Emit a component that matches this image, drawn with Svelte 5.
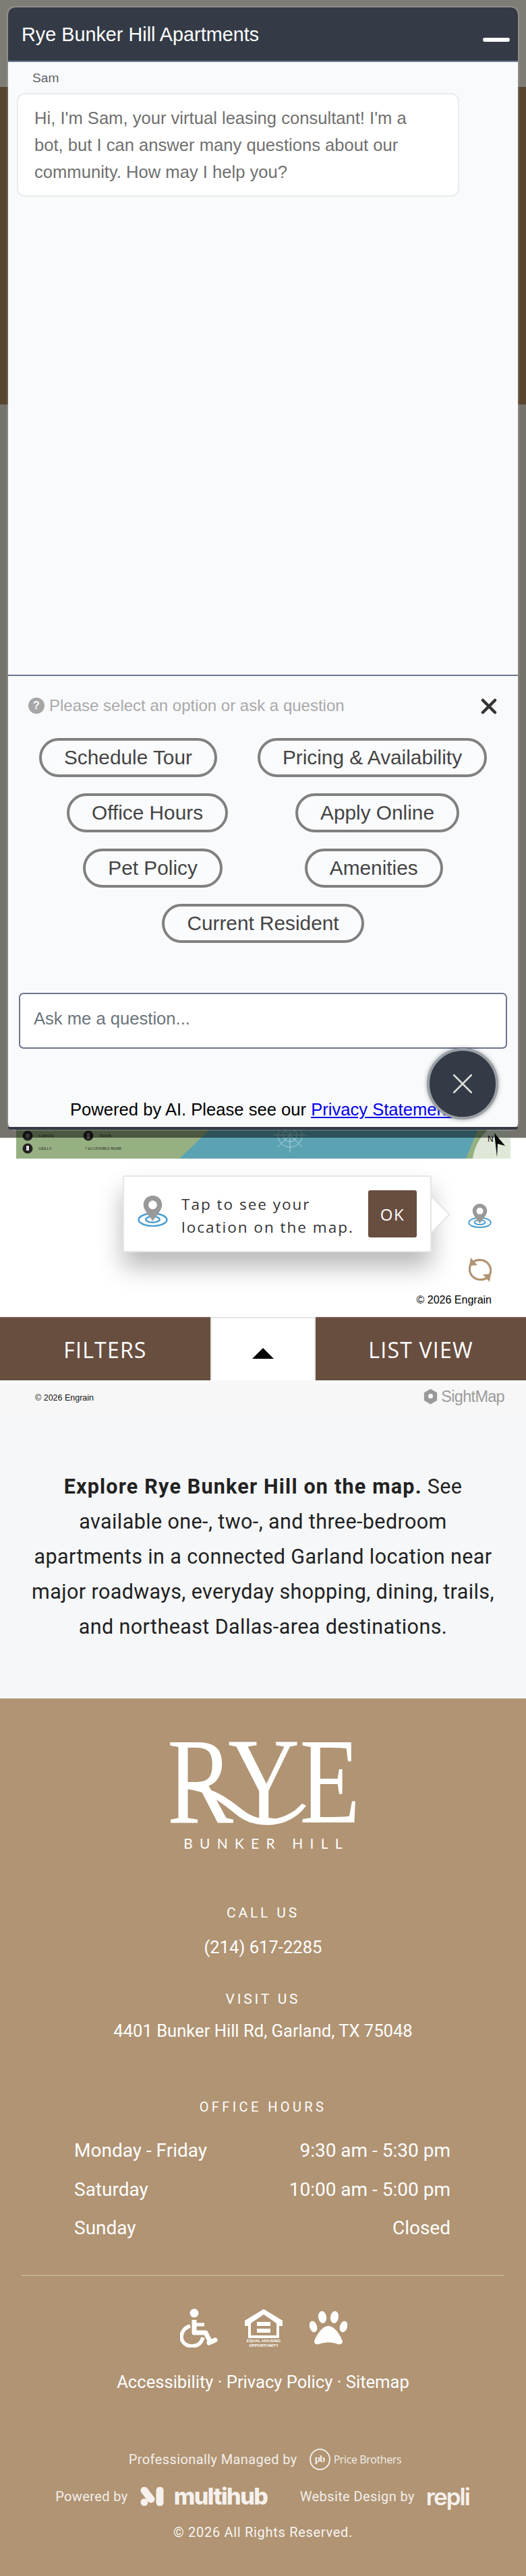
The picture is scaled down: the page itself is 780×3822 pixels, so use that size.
<script>
  const rows = [
    { cls: 'g60', items: ['Schedule Tour', 'Pricing & Availability'] },
    { cls: 'g100', items: ['Office Hours', 'Apply Online'] },
    { cls: 'g122', items: ['Pet Policy', 'Amenities'] },
    { cls: '', items: ['Current Resident'] }
  ];
  const hours = [
    ['Monday - Friday', '9:30 am - 5:30 pm'],
    ['Saturday', '10:00 am - 5:00 pm'],
    ['Sunday', 'Closed']
  ];
</script>

{#snippet pin(cls)}
  <svg class={cls} viewBox="0 0 44 45" aria-hidden="true">
    <ellipse cx="22" cy="35" rx="20.5" ry="9" fill="none" stroke="#4b9fd1" stroke-width="2.5" />
    <ellipse cx="22" cy="34.5" rx="10" ry="4.4" fill="none" stroke="#4b9fd1" stroke-width="2.5" />
    <path d="M22 0C13.5 0 8.5 6.5 8.5 13.5 8.5 21.5 18.5 31 22 37 25.500 31 35.500 21.500 35.500 13.500 35.500 6.500 30.500 0 22 0Z" fill="#999" />
    <circle cx="22" cy="13.500" r="6.300" fill="#fff" />
  </svg>
{/snippet}

<div class="page">
  <section class="hero">
    <div class="band-top"></div>
    <div class="band-brown"></div>
    <div class="band-gray"></div>
    <div class="map-wrap">
      <svg class="map" viewBox="0 0 733 59" aria-label="Community site map">
        <rect width="733" height="59" fill="#97b082" />
        <path d="M304 0H691L667 59H242Z" fill="#5ba3b3" />
        <path d="M677 59C680 36 694 16 720 0H733V59Z" fill="#dfe8d8" />
        <g fill="none" stroke="#a9d0d8" stroke-width="1">
          <circle cx="406" cy="24" r="10" />
          <circle cx="406" cy="24" r="18" />
          <path d="M406 0V50M381 24H431M388 6 424 42M424 6 388 42" />
        </g>
        <circle cx="17" cy="25" r="7.500" fill="#222" />
        <circle cx="107" cy="25" r="7.500" fill="#222" />
        <circle cx="17" cy="44" r="7.500" fill="#222" />
        <circle cx="17" cy="25" r="3" fill="#777" />
        <rect x="105" y="21" width="4" height="8" fill="#777" />
        <rect x="15" y="40" width="4" height="7" fill="#ddd" />
        <g class="legend">
          <text x="33" y="27">CABANA</text>
          <text x="123" y="27">TRASH</text>
          <text x="33" y="46">GRILLS</text>
          <text x="102" y="46">* ACCESSIBLE HOME</text>
        </g>
        <text class="north" x="699" y="34">N</text>
        <path d="M709 21 725 40 714 37 713 57Z" fill="#000" />
      </svg>
    </div>
    <div class="overlay"></div>

    <aside class="chat">
      <header class="chat-head">
        <h1>Rye Bunker Hill Apartments</h1>
        <span class="minimize"></span>
      </header>
      <div class="messages">
        <div class="sender">Sam</div>
        <p class="bubble">Hi, I'm Sam, your virtual leasing consultant! I'm a bot, but I can answer many questions about our community. How may I help you?</p>
      </div>
      <div class="options">
        <div class="prompt">
          <span class="q">?</span>
          <span class="prompt-text">Please select an option or ask a question</span>
          <svg class="close" viewBox="0 0 24 24" aria-hidden="true"><path d="M3 3 21 21M21 3 3 21" stroke="#333" stroke-width="4.500" stroke-linecap="round" /></svg>
        </div>
        <div class="choices">
          {#each rows as row}
            <div class="choice-row {row.cls}">
              {#each row.items as item}
                <button type="button">{item}</button>
              {/each}
            </div>
          {/each}
        </div>
        <div class="ask">Ask me a question...</div>
        <p class="ai">Powered by AI. Please see our <a href="#privacy">Privacy Statement.</a></p>
      </div>
      <div class="strip"></div>
      <div class="fab">
        <svg viewBox="0 0 28 28" aria-hidden="true"><path d="M1 1 27 27M27 1 1 27" stroke="#ddd" stroke-width="2.500" stroke-linecap="round" /></svg>
      </div>
    </aside>
  </section>

  <section class="controls">
    <div class="controls-row">
      <div class="tip">
        {@render pin('tip-pin')}
        <p>Tap to see your<br />location on the map.</p>
        <button type="button" class="ok">OK</button>
        <span class="tip-arrow"></span>
      </div>
      <div class="side">
        {@render pin('side-pin')}
        <svg class="refresh" viewBox="0 0 34 36" aria-hidden="true">
          <path d="M4 9C9 2 22 1 29 9 34 15 33 22 31 26" fill="none" stroke="#b09473" stroke-width="3.200" />
          <path d="M30 27C25 34 12 35 5 27 0 21 1 14 3 10" fill="none" stroke="#b09473" stroke-width="3.200" />
          <path d="M3 0 1 12 13 11Z" fill="#b09473" />
          <path d="M31 36 33 24 21 25Z" fill="#b09473" />
        </svg>
      </div>
    </div>
    <div class="engrain">© 2026 Engrain</div>
  </section>

  <nav class="tabs">
    <div class="tab">FILTERS</div>
    <div class="tab-mid"><span class="tri"></span></div>
    <div class="tab">LIST VIEW</div>
  </nav>

  <div class="credit">
    <span class="credit-text">© 2026 Engrain</span>
    <span class="sightmap">
      <svg viewBox="0 0 24 26" aria-hidden="true">
        <path d="M12 0 23 6.500V19.500L12 26 1 19.500V6.500Z" fill="#999" />
        <circle cx="12" cy="12.500" r="4" fill="#f7f7f7" />
      </svg>
      SightMap
    </span>
  </div>

  <section class="explore">
    <p><strong>Explore Rye Bunker Hill on the map.</strong> See available one-, two-, and three-bedroom apartments in a connected Garland location near major roadways, everyday shopping, dining, trails, and northeast Dallas-area destinations.</p>
  </section>

  <footer>
    <div class="logo">
      <svg viewBox="0 0 280 124" aria-label="Rye logo">
        <text class="logo-text" x="-2" y="121" textLength="286" lengthAdjust="spacingAndGlyphs">RYE</text>
        <path d="M22 68C62 64 86 84 112 104 134 121 172 122 198 93L204 96C180 130 132 132 104 112 78 92 60 74 22 71Z" fill="#fff" />
      </svg>
      <div class="logo-sub">BUNKER HILL</div>
    </div>

    <h2 class="call">CALL US</h2>
    <p class="info phone">(214) 617-2285</p>
    <h2 class="visit">VISIT US</h2>
    <p class="info addr">4401 Bunker Hill Rd, Garland, TX 75048</p>
    <h2 class="office">OFFICE HOURS</h2>

    <div class="hours">
      {#each hours as h}
        <div class="hour-row"><span>{h[0]}</span><span>{h[1]}</span></div>
      {/each}
    </div>

    <hr />

    <div class="badges">
      <svg class="b-wheel" viewBox="0 0 56 58" aria-hidden="true">
        <circle cx="21" cy="7" r="6.500" fill="#fff" />
        <path d="M21 17V36H38L45 50" fill="none" stroke="#fff" stroke-width="7" stroke-linejoin="round" />
        <path d="M21 24H36" fill="none" stroke="#fff" stroke-width="5" />
        <path d="M43 51 52 47" fill="none" stroke="#fff" stroke-width="7" stroke-linecap="round" />
        <path d="M15 26C5 29 2 37 2 42 2 51 10 56 18 56 26 56 32 51 34 43" fill="none" stroke="#fff" stroke-width="5.500" />
      </svg>
      <svg class="b-eho" viewBox="0 0 56 56" aria-hidden="true">
        <path d="M28 0 56 17V25H51V43H5V25H0V17ZM9 21V39H47V21L28 8Z" fill="#fff" fill-rule="evenodd" />
        <rect x="18" y="19" width="20" height="6" fill="#fff" />
        <rect x="18" y="29" width="20" height="6" fill="#fff" />
        <text x="28" y="49" class="eho-text">EQUAL HOUSING</text>
        <text x="28" y="55.500" class="eho-text">OPPORTUNITY</text>
      </svg>
      <svg class="b-paw" viewBox="0 0 56 50" aria-hidden="true">
        <ellipse cx="5.500" cy="23" rx="5.500" ry="8.500" fill="#fff" transform="rotate(-18 5.500 23)" />
        <ellipse cx="19" cy="9" rx="6" ry="9" fill="#fff" transform="rotate(-8 19 9)" />
        <ellipse cx="37" cy="9" rx="6" ry="9" fill="#fff" transform="rotate(8 37 9)" />
        <ellipse cx="50.500" cy="23" rx="5.500" ry="8.500" fill="#fff" transform="rotate(18 50.500 23)" />
        <path d="M28 22C18 22 9 38 7 45 7 50 12 50 17 48 24 46 32 46 39 48 44 50 49 50 49 45 47 38 38 22 28 22Z" fill="#fff" />
      </svg>
    </div>

    <p class="links">Accessibility · Privacy Policy · Sitemap</p>

    <div class="managed">
      <span>Professionally Managed by</span>
      <span class="pb-mark"><span>pb</span></span>
      <span class="pb-name">Price Brothers</span>
    </div>

    <div class="powered">
      <span>Powered by</span>
      <svg class="mh-icon" viewBox="0 0 35 28" aria-hidden="true">
        <path d="M6 5 16 18" stroke="#f6f1ed" stroke-width="11" stroke-linecap="round" />
        <circle cx="6" cy="22.500" r="5.500" fill="#f6f1ed" />
        <path d="M29 5V23" stroke="#f6f1ed" stroke-width="11" stroke-linecap="round" />
      </svg>
      <span class="mh-word">multihub</span>
      <span class="design">Website Design by</span>
      <span class="repli">repli</span>
    </div>

    <p class="copy">© 2026 All Rights Reserved.</p>
  </footer>
</div>

<style>
  :global(body) { margin: 0; background: #fff; }
  * { box-sizing: border-box; }
  p, h1, h2 { margin: 0; font-weight: 400; }

  .page { width: 780px; height: 3822px; overflow: hidden; font-family: Roboto, sans-serif; }

  .hero { position: relative; height: 1719px; display: flex; flex-direction: column; }
  .band-top { height: 129px; background: #fff9ea; }
  .band-brown { height: 471px; background: #ae8a5e; }
  .band-gray { flex: 1; background: #eae6d8; }
  .map-wrap {
    height: 59px; padding: 0 23px 0 24px;
    background: linear-gradient(#eae6d8 29px, #fff 29px);
  }
  .map { display: block; width: 733px; height: 59px; }
  .legend text { font: 5.500px "Liberation Serif", serif; fill: #222; }
  .north { font: 12px "Liberation Sans", sans-serif; fill: #000; }

  .overlay { position: absolute; left: 0; right: 0; top: 0; height: 1688px; background: rgba(0, 0, 0, 0.5); }

  .chat {
    position: absolute; left: 12px; top: 11px; width: 756px; height: 1665px;
    display: flex; flex-direction: column;
    background: #f9fafc; border-radius: 10px;
    box-shadow: 0 0 0 2px rgba(255, 255, 255, 0.14);
    font-family: "Liberation Sans", Arial, sans-serif;
  }
  .chat-head {
    height: 81px; padding: 0 12px 0 20px; flex: none;
    display: flex; align-items: center; justify-content: space-between;
    background: #343b46; border-bottom: 2px solid #6b7590;
    border-radius: 10px 10px 0 0;
  }
  .chat-head h1 { font-size: 28.800px; line-height: 1; color: #fff; margin-top: 2px; }
  .minimize { width: 40px; height: 6px; border-radius: 3px; background: #fff; margin-top: 16px; }

  .messages { flex: 1; padding: 13px 13px 0; }
  .sender { font-size: 19.200px; line-height: 22px; color: #5f6368; padding-left: 23px; }
  .bubble {
    width: 656px; height: 154px; margin-top: 11px; padding: 15px 50px 15px 24px;
    background: #fff; border: 2px solid #e7ecec; border-radius: 12px;
    font-size: 25.600px; line-height: 40px; color: #707070;
  }

  .options { flex: none; height: 671px; border-top: 2px solid #6b7590; position: relative; }
  .prompt { height: 92px; padding: 32px 0 0 30px; display: flex; align-items: flex-start; }
  .q {
    width: 24px; height: 24px; border-radius: 50%; background: #a6a6a6;
    color: #fff; font-weight: 700; font-size: 16px; line-height: 24px; text-align: center; flex: none;
  }
  .prompt-text { margin-left: 7px; font-size: 24px; line-height: 24px; color: #a9a9a9; }
  .close { position: absolute; left: 701px; top: 33px; width: 24px; height: 24px; }

  .choices { display: flex; flex-direction: column; gap: 24px; }
  .choice-row { display: flex; justify-content: center; }
  .g60 { gap: 60px; }
  .g100 { gap: 100px; }
  .g122 { gap: 122px; }
  button { font-family: inherit; cursor: pointer; }
  .choice-row button {
    height: 58px; padding: 0 33px;
    background: #fafbfd; border: 4px solid #808080; border-radius: 29px;
    font-size: 29.800px; line-height: 1; color: #444;
  }

  .ask {
    margin: 74px 0 0 16px; width: 724px; height: 83px; padding: 21px 20px;
    background: #fff; border: 2px solid #6b7590; border-radius: 7px;
    font-size: 25.600px; line-height: 30px; color: #6c757d;
  }
  .ai { margin-top: 75px; text-align: center; font-size: 25.600px; line-height: 30px; color: #000; white-space: nowrap; }
  .ai a { color: #00e; text-decoration: underline; }

  .strip { flex: none; height: 4px; background: #343b46; border-radius: 0 0 10px 10px; }

  .fab {
    position: absolute; left: 621px; top: 1544px; width: 106px; height: 106px;
    display: flex; align-items: center; justify-content: center;
    background: #343b46; border: 4px solid #9a9fa6; border-radius: 50%;
    box-shadow: 0 0 6px rgba(0, 0, 0, 0.35);
  }
  .fab svg { width: 28px; height: 28px; }

  .controls { position: relative; height: 235px; padding: 25px 51px 0 182px; font-family: "Open Sans", sans-serif; }
  .controls-row { display: flex; align-items: flex-start; }
  .tip {
    position: relative; width: 458px; height: 114px; padding: 20px 20px 0 20px;
    display: flex; align-items: flex-start;
    background: #fff; border: 2px solid #e6e6e6; border-radius: 3px;
    box-shadow: 0 22px 36px rgba(0, 0, 0, 0.28);
  }
  .tip-pin { width: 45px; height: 46px; flex: none; margin-top: 8px; }
  .tip p { width: 279px; margin-left: 20px; padding-top: 4px; font-size: 22.500px; line-height: 34px; letter-spacing: 2px; color: #333; white-space: nowrap; }
  .ok {
    width: 72px; height: 70px; flex: none; margin-left: 0; border: 0; border-radius: 3px;
    background: #684e3f; color: #fff; font: 400 24px "Open Sans", sans-serif; letter-spacing: 1.500px;
  }
  .tip-arrow {
    position: absolute; left: 456px; top: 28px; width: 28px; height: 56px;
    background: #e6e6e6; clip-path: polygon(0 0, 100% 50%, 0 100%);
  }
  .tip-arrow::after {
    content: ""; position: absolute; left: 0; top: 3px; width: 25px; height: 50px;
    background: #fff; clip-path: polygon(0 0, 100% 50%, 0 100%);
  }
  .side { width: 89px; padding-top: 42px; display: flex; flex-direction: column; align-items: flex-end; }
  .side-pin { width: 35px; height: 36px; }
  .refresh { width: 34px; height: 36px; margin-top: 44px; }
  .engrain {
    position: absolute; right: 51px; top: 200px;
    font: 16px/20px "Liberation Sans", sans-serif; color: #000;
  }

  .tabs { display: grid; grid-template-columns: 312px 156px 312px; height: 94px; font-family: "Open Sans", sans-serif; }
  .tab {
    display: flex; align-items: center; justify-content: center;
    background: #684e3f; border-top: 2px solid #755c4e;
    color: #fff; font-size: 32px; font-weight: 400; letter-spacing: 1.200px;
  }
  .tab-mid {
    display: flex; align-items: flex-start; justify-content: center; padding-top: 44px;
    background: #fff; border: 2px solid #e5e5e5; border-bottom: 0;
  }
  .tri { width: 32px; height: 16px; background: #000; clip-path: polygon(50% 0, 100% 100%, 0 100%); }

  .credit {
    height: 52px; padding: 0 32px 0 52px;
    display: flex; align-items: center; justify-content: space-between;
    background: #f7f7f7;
  }
  .credit-text { font: 12.500px/16px "Liberation Sans", sans-serif; color: #111; }
  .sightmap {
    display: flex; align-items: center; gap: 5px; margin-top: -4px;
    font: 23.500px/26px "Liberation Sans", sans-serif; color: #9c9c9c; letter-spacing: -0.700px;
  }
  .sightmap svg { width: 21px; height: 24px; }

  .explore { height: 420px; padding: 80px 42px 0; background: #f5f7f9; text-align: center; }
  .explore p { font-size: 30.500px; line-height: 52px; letter-spacing: 0.400px; color: #222; }
  .explore strong { font-weight: 700; letter-spacing: 1.200px; }

  footer { height: 1302px; background: #b09473; color: #fff; text-align: center; overflow: hidden; }
  .logo { width: 280px; margin: 63px auto 0; }
  .logo svg { display: block; width: 280px; height: 124px; overflow: visible; }
  .logo-text { font: 183px "Liberation Serif", serif; fill: #fff; }
  .logo-sub { margin-top: 16px; font: 400 21px/24px Lato, sans-serif; letter-spacing: 10.200px; padding-left: 10px; white-space: nowrap; }

  h2 { font-size: 21px; line-height: 26px; letter-spacing: 3.800px; }
  .info { font-size: 25.600px; line-height: 32px; }
  .call { margin-top: 78px; }
  .phone { margin-top: 22px; }
  .visit { margin-top: 48px; }
  .addr { margin-top: 18px; }
  .office { margin-top: 84px; font-size: 20px; letter-spacing: 4.400px; }

  .hours { margin: 23px 112px 0 110px; }
  .hour-row { display: flex; justify-content: space-between; font-size: 28px; line-height: 57.500px; }

  hr { margin: 40px 32px 0; border: 0; height: 2px; background: rgba(255, 255, 255, 0.25); }

  .badges { margin-top: 48px; display: flex; justify-content: center; align-items: center; gap: 40px; padding-left: 2px; }
  .b-wheel { width: 56px; height: 58px; }
  .b-eho { width: 56px; height: 56px; }
  .b-paw { width: 56px; height: 50px; }
  .eho-text { font: 700 6px "Liberation Sans", sans-serif; fill: #fff; text-anchor: middle; }

  .links { margin-top: 35px; font-size: 25.600px; line-height: 32px; }

  .managed, .powered {
    display: flex; justify-content: center; align-items: center;
    font-size: 20px; letter-spacing: 0.400px; color: #f3eee9;
  }
  .managed { margin-top: 81px; height: 36px; padding-left: 6px; }
  .pb-mark {
    width: 31px; height: 32px; margin-left: 18px; flex: none;
    display: flex; align-items: center; justify-content: center;
    border: 2px solid #f3eee9; border-radius: 50%;
  }
  .pb-mark span { font: 700 15px/1 "Liberation Serif", serif; letter-spacing: -1px; }
  .pb-name { margin-left: 5px; font: 16px "Open Sans", sans-serif; letter-spacing: -0.400px; }

  .powered { margin-top: 19px; height: 36px; }
  .mh-icon { width: 35px; height: 28px; margin-left: 18px; flex: none; }
  .mh-word { margin-left: 15px; width: 140px; text-align: left; font: 800 34px/36px Inter, sans-serif; letter-spacing: -1.500px; color: #f6f1ed; }
  .design { margin-left: 47px; }
  .repli { margin-left: 17px; width: 66px; text-align: left; font: 600 35px/36px Inter, sans-serif; letter-spacing: -2px; color: #f6f1ed; }

  .copy { margin-top: 21px; font-size: 20px; line-height: 28px; letter-spacing: 0.700px; color: #f8f5f1; }
</style>
